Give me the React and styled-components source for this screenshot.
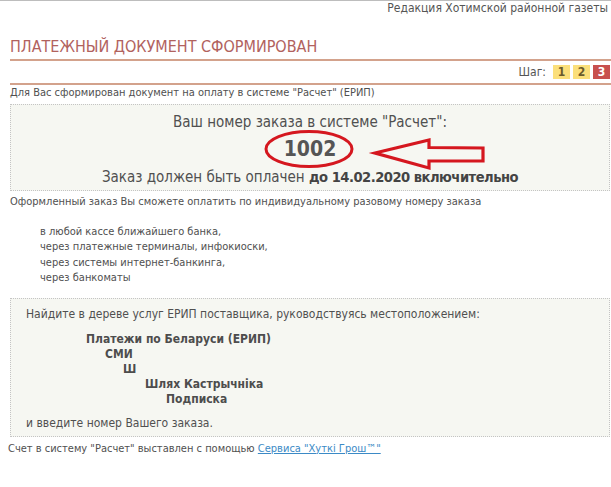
import React from "react";
import styled, { createGlobalStyle } from "styled-components";

const Global = createGlobalStyle`
  html, body { margin: 0; padding: 0; background: #fff; }
  body {
    font-family: "DejaVu Sans Condensed", "DejaVu Sans", sans-serif;
    font-stretch: condensed;
    color: #505050;
  }
`;

const Page = styled.div`
  width: 611px;
  height: 487px;
  border-top: 1px solid #bdbdbd;
  box-sizing: border-box;
  padding: 0 0 0 10px;
`;

const Header = styled.div`
  text-align: right;
  font-size: 12px;
  line-height: 14px;
  color: #555;
  margin-right: 3px;
`;

const Title = styled.h1`
  margin: 23px 0 0 0;
  font-size: 16px;
  line-height: 18px;
  font-weight: normal;
  color: #b1625e;
  padding-bottom: 3px;
  border-bottom: 2px solid #d3a28c;
`;

const StepsBar = styled.div`
  display: flex;
  justify-content: flex-end;
  align-items: center;
  gap: 3px;
  height: 22px;
  padding-right: 1px;
  border-bottom: 2px solid #d3a28c;
  font-size: 12px;
  color: #555;
`;

const StepLabel = styled.span`
  margin-right: 4px;
`;

const Step = styled.span`
  display: inline-flex;
  align-items: center;
  justify-content: center;
  width: 17px;
  height: 14px;
  font-size: 12px;
  font-weight: bold;
  background: ${(p) => (p.$active ? "#c8504e" : "#fbdf7a")};
  color: ${(p) => (p.$active ? "#fff" : "#6a5a2a")};
`;

const Small = styled.p`
  margin: ${(p) => p.$m || "0"};
  font-size: 11px;
  line-height: 15px;
  color: #505050;
`;

const Box = styled.div`
  position: relative;
  border: 1px dotted #c4c4c4;
  background: #f6f7f2;
  margin-right: 1px;
  padding: ${(p) => p.$pad || "0"};
`;

const OrderLine = styled.div`
  text-align: center;
  font-size: 15px;
  line-height: 18px;
  color: #505050;
`;

const OrderNumber = styled.div`
  text-align: center;
  font-size: 21px;
  line-height: 24px;
  font-weight: bold;
  color: #555;
  margin: 6px 0 7px;
`;

const Bold = styled.b`
  color: #444;
  font-size: 14.6px;
  letter-spacing: -0.5px;
`;

const Annotation = styled.svg`
  position: absolute;
  left: 0;
  top: 0;
  pointer-events: none;
  overflow: visible;
`;

const List = styled.div`
  margin: 15px 0 12px 30px;
  font-size: 11px;
  line-height: 15.4px;
  color: #505050;
`;

const Para = styled.div`
  font-size: 12px;
  line-height: 15px;
  color: #505050;
`;

const Tree = styled.div`
  margin: 10px 0 8px 60px;
  font-size: 12px;
  line-height: 15.2px;
  font-weight: bold;
  color: #4d4d4d;
`;

const TreeItem = styled.div`
  padding-left: ${(p) => p.$indent}px;
`;

const Footer = styled.p`
  margin: 5px 0 0 -2px;
  font-size: 11px;
  line-height: 14px;
  color: #505050;
`;

const Link = styled.a`
  color: #3b8ac6;
  text-decoration: underline;
`;

export default function App() {
  return (
    <>
      <Global />
      <Page>
        <Header>Редакция Хотимской районной газеты</Header>
        <Title>ПЛАТЕЖНЫЙ ДОКУМЕНТ СФОРМИРОВАН</Title>
        <StepsBar>
          <StepLabel>Шаг:</StepLabel>
          <Step>1</Step>
          <Step>2</Step>
          <Step $active>3</Step>
        </StepsBar>
        <Small $m="0 0 4px">Для Вас сформирован документ на оплату в системе "Расчет" (ЕРИП)</Small>
        <Box $pad="8px 0 4px">
          <OrderLine>Ваш номер заказа в системе "Расчет":</OrderLine>
          <OrderNumber>1002</OrderNumber>
          <OrderLine>
            Заказ должен быть оплачен <Bold>до 14.02.2020 включительно</Bold>
          </OrderLine>
          <Annotation width="599" height="86" viewBox="0 0 599 86">
            <ellipse cx="298" cy="44" rx="43" ry="17.5" fill="none" stroke="#d5171f" strokeWidth="3" />
            <path
              d="M364 48 L418 35 L418 42.5 L472 43 L472 56 L418 56 L418 63 Z"
              fill="none"
              stroke="#d5171f"
              strokeWidth="3.2"
              strokeLinejoin="miter"
            />
          </Annotation>
        </Box>
        <Small $m="3px 0 0">Оформленный заказ Вы сможете оплатить по индивидуальному разовому номеру заказа</Small>
        <List>
          <div>в любой кассе ближайшего банка,</div>
          <div>через платежные терминалы, инфокиоски,</div>
          <div>через системы интернет-банкинга,</div>
          <div>через банкоматы</div>
        </List>
        <Box $pad="8px 15px 5px">
          <Para>Найдите в дереве услуг ЕРИП поставщика, руководствуясь местоположением:</Para>
          <Tree>
            <TreeItem $indent={0}>Платежи по Беларуси (ЕРИП)</TreeItem>
            <TreeItem $indent={19}>СМИ</TreeItem>
            <TreeItem $indent={37}>Ш</TreeItem>
            <TreeItem $indent={59}>Шлях Кастрычніка</TreeItem>
            <TreeItem $indent={80}>Подписка</TreeItem>
          </Tree>
          <Para>и введите номер Вашего заказа.</Para>
        </Box>
        <Footer>
          Счет в систему "Расчет" выставлен с помощью <Link href="#">Сервиса "Хуткi Грош™"</Link>
        </Footer>
      </Page>
    </>
  );
}
